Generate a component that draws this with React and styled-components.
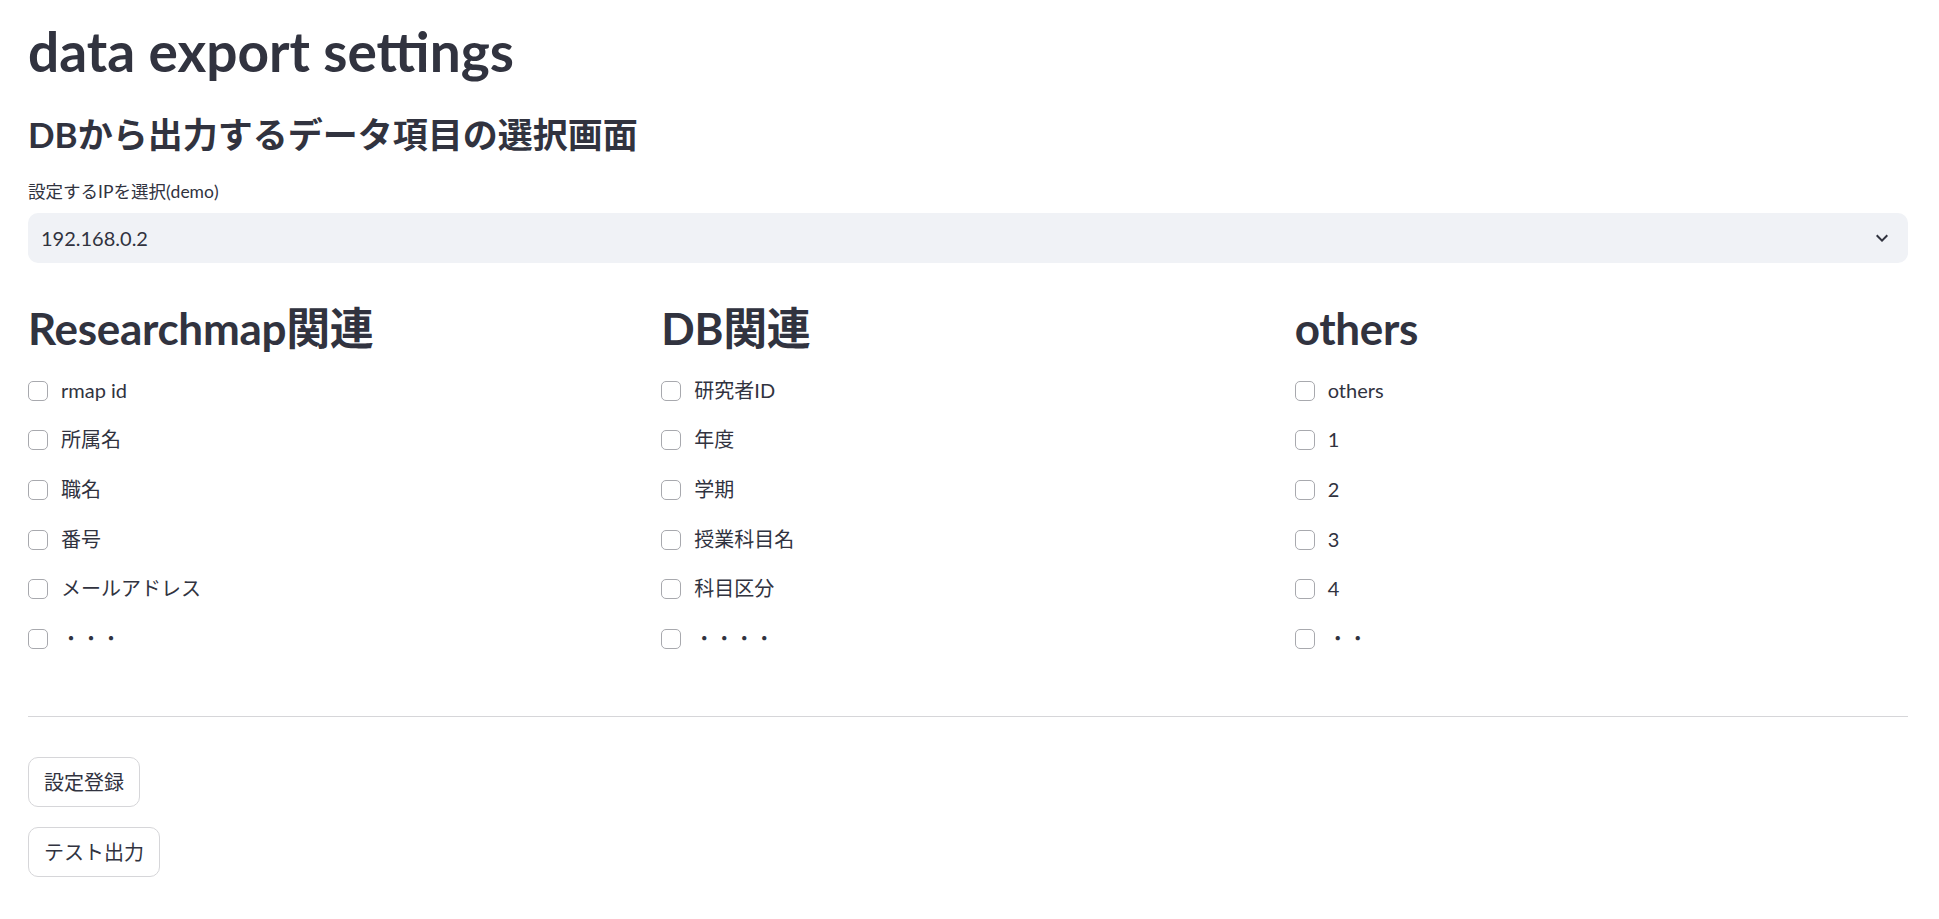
import React, { useState } from 'react';
import styled, { createGlobalStyle } from 'styled-components';

const GlobalStyle = createGlobalStyle`
  html, body {
    margin: 0;
    padding: 0;
    background: #ffffff;
  }
  body {
    font-family: Lato, "Noto Sans CJK JP", sans-serif;
    color: #31333f;
  }
`;

const columns = [
  {
    title: 'Researchmap関連',
    items: ['rmap id', '所属名', '職名', '番号', 'メールアドレス', '・・・'],
  },
  {
    title: 'DB関連',
    items: ['研究者ID', '年度', '学期', '授業科目名', '科目区分', '・・・・'],
  },
  {
    title: 'others',
    items: ['others', '1', '2', '3', '4', '・・'],
  },
];

const ChevronDown = () => (
  <svg width="24" height="24" viewBox="0 0 24 24" fill="#31333f">
    <path d="M16.59 8.59L12 13.17 7.41 8.59 6 10l6 6 6-6z" />
  </svg>
);

const App = () => {
  const [checked, setChecked] = useState({});

  const toggle = (key) => {
    setChecked((prev) => ({ ...prev, [key]: !prev[key] }));
  };

  return (
    <Page>
      <GlobalStyle />
      <Title>data export settings</Title>
      <Subtitle>DBから出力するデータ項目の選択画面</Subtitle>

      <FieldLabel>設定するIPを選択(demo)</FieldLabel>
      <Select>
        <span>192.168.0.2</span>
        <ChevronDown />
      </Select>

      <Columns>
        {columns.map((col) => (
          <Column key={col.title}>
            <ColumnTitle>{col.title}</ColumnTitle>
            <CheckList>
              {col.items.map((item, i) => {
                const key = col.title + i;
                return (
                  <CheckRow key={key} onClick={() => toggle(key)}>
                    <Box $checked={!!checked[key]} />
                    <CheckLabel>{item}</CheckLabel>
                  </CheckRow>
                );
              })}
            </CheckList>
          </Column>
        ))}
      </Columns>

      <Divider />

      <Buttons>
        <Button type="button">設定登録</Button>
        <Button type="button">テスト出力</Button>
      </Buttons>
    </Page>
  );
};

const Page = styled.div`
  padding: 18px 31px 40px 28px;
  display: flex;
  flex-direction: column;
  align-items: stretch;
`;

const Title = styled.h1`
  margin: 0;
  font-size: 55px;
  line-height: 66px;
  font-weight: 700;
`;

const Subtitle = styled.h3`
  margin: 29px 0 0;
  font-size: 35px;
  line-height: 42px;
  font-weight: 700;
`;

const FieldLabel = styled.label`
  margin-top: 24px;
  font-size: 17.5px;
  line-height: 26px;
`;

const Select = styled.div`
  margin-top: 8px;
  height: 50px;
  box-sizing: border-box;
  background: #f0f2f6;
  border-radius: 10px;
  display: flex;
  align-items: center;
  justify-content: space-between;
  padding: 0 14px 0 13px;
  font-size: 20px;

  span {
    line-height: 1;
    margin-top: -1px;
  }
`;

const Columns = styled.div`
  margin-top: 38px;
  display: grid;
  grid-template-columns: repeat(3, 1fr);
  gap: 20px;
`;

const Column = styled.div`
  display: flex;
  flex-direction: column;
`;

const ColumnTitle = styled.h2`
  margin: 0;
  font-size: 44px;
  line-height: 54px;
  font-weight: 700;
  letter-spacing: -0.3px;
`;

const CheckList = styled.div`
  margin-top: 11px;
  display: flex;
  flex-direction: column;
`;

const CheckRow = styled.div`
  height: 49.6px;
  display: flex;
  align-items: center;
  gap: 13px;
  cursor: pointer;
`;

const Box = styled.span`
  width: 20px;
  height: 20px;
  box-sizing: border-box;
  border: 1px solid #a8a9ae;
  border-radius: 5px;
  background: ${(p) => (p.$checked ? '#ff4b4b' : '#ffffff')};
  flex-shrink: 0;
`;

const CheckLabel = styled.span`
  font-size: 20px;
  line-height: 24px;
  margin-top: -2px;
`;

const Divider = styled.hr`
  margin: 52px 0 0;
  border: none;
  border-top: 1px solid #d6d6d9;
  height: 0;
`;

const Buttons = styled.div`
  margin-top: 40px;
  display: flex;
  flex-direction: column;
  align-items: flex-start;
  gap: 20px;
`;

const Button = styled.button`
  height: 50px;
  padding: 0 15px;
  border: 1px solid #d6d6d9;
  border-radius: 10px;
  background: #ffffff;
  color: #31333f;
  font-family: inherit;
  font-size: 20px;
  line-height: 1;
  cursor: pointer;
`;

export default App;
